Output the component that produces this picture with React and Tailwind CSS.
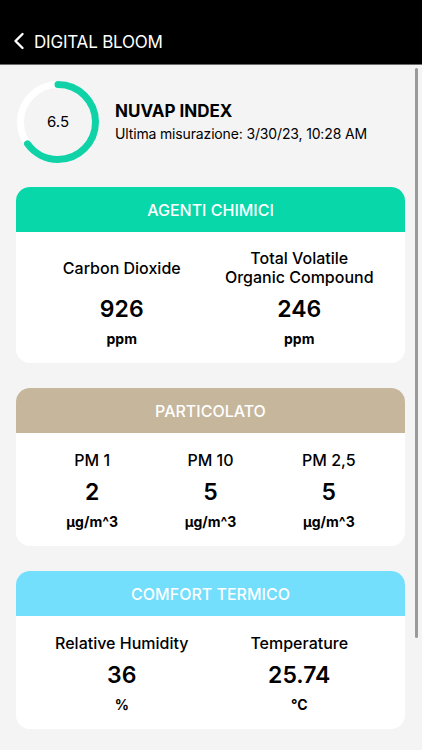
import React from 'react';

const FONT = { fontFamily: 'Inter, "Noto Sans", sans-serif' };

// dati della schermata
const SECTIONS = [
  {
    title: 'AGENTI CHIMICI',
    color: 'bg-[#08d7aa]',
    cols: 'grid-cols-2',
    label: 'h-[38px]',
    items: [
      { label: 'Carbon Dioxide', value: '926', unit: 'ppm' },
      { label: ['Total Volatile', 'Organic Compound'], value: '246', unit: 'ppm' },
    ],
  },
  {
    title: 'PARTICOLATO',
    color: 'bg-[#c6b69b]',
    cols: 'grid-cols-3',
    label: 'h-[20px]',
    items: [
      { label: 'PM 1', value: '2', unit: 'µg/m^3' },
      { label: 'PM 10', value: '5', unit: 'µg/m^3' },
      { label: 'PM 2,5', value: '5', unit: 'µg/m^3' },
    ],
  },
  {
    title: 'COMFORT TERMICO',
    color: 'bg-[#74defd]',
    cols: 'grid-cols-2',
    label: 'h-[20px]',
    items: [
      { label: 'Relative Humidity', value: '36', unit: '%' },
      { label: 'Temperature', value: '25.74', unit: '°C' },
    ],
  },
];

const Ring = ({ value }) => {
  const r = 37.5;
  const c = 2 * Math.PI * r;
  const pct = value / 10;
  return (
    <div className="relative w-[82px] h-[82px] flex-shrink-0">
      <svg width="82" height="82" viewBox="0 0 82 82" className="absolute inset-0 -rotate-90">
        <circle cx="41" cy="41" r={r} fill="none" stroke="#ffffff" strokeWidth="7" />
        <circle
          cx="41"
          cy="41"
          r={r}
          fill="none"
          stroke="#0fd3a6"
          strokeWidth="7"
          strokeLinecap="round"
          strokeDasharray={`${c * pct} ${c}`}
        />
      </svg>
      <div className="absolute inset-0 flex items-center justify-center text-[15px] text-black">
        {value}
      </div>
    </div>
  );
};

const Section = ({ section }) => (
  <div className="rounded-[14px] overflow-hidden bg-white">
    <div className={`${section.color} h-[45px] flex items-center justify-center text-white text-[16px] font-medium`}>
      {section.title}
    </div>
    <div className={`grid ${section.cols} px-[17px] pt-[17px] pb-[16px]`}>
      {section.items.map((item, i) => (
        <div key={i} className="flex flex-col items-center text-black">
          <div className={`${section.label} flex flex-col justify-center items-center text-[16px] leading-[19px] font-medium text-center`}>
            {Array.isArray(item.label) ? item.label.map((l) => <span key={l}>{l}</span>) : item.label}
          </div>
          <div className="mt-[9px] text-[23px] leading-[26px] font-semibold">{item.value}</div>
          <div className="mt-[8px] text-[14px] leading-[17px] font-bold">{item.unit}</div>
        </div>
      ))}
    </div>
  </div>
);

const App = () => {
  return (
    <div className="relative w-[422px] h-[750px] overflow-hidden bg-[#f4f4f4]" style={FONT}>
      {/* Header */}
      <div className="h-[65px] bg-black border-b border-[#6b6b6b] flex items-end pb-[12px] pl-[13px]">
        <svg width="12" height="18" viewBox="0 0 12 18" className="mr-[9px] mb-[2px]">
          <path d="M9.5 2 L2.5 9 L9.5 16" fill="none" stroke="#fff" strokeWidth="2.4" strokeLinecap="round" strokeLinejoin="round" />
        </svg>
        <span className="text-white text-[17px] leading-[20px] tracking-[-0.2px]">DIGITAL BLOOM</span>
      </div>

      {/* Contenuto */}
      <div className="pl-4 pr-[17px]">
        <div className="flex items-center pt-[16px] pl-[1px]">
          <Ring value={6.5} />
          <div className="ml-[16px] text-black">
            <p className="text-[17px] leading-[22px] font-bold">NUVAP INDEX</p>
            <p className="text-[14px] leading-[20px] mt-[2px] tracking-[-0.15px]">Ultima misurazione: 3/30/23, 10:28 AM</p>
          </div>
        </div>

        <div className="mt-[24px] flex flex-col gap-[25px]">
          {SECTIONS.map((s) => (
            <Section key={s.title} section={s} />
          ))}
        </div>
      </div>

      {/* indicatore di scorrimento */}
      <div className="absolute left-[415px] top-[68px] w-[3px] h-[570px] rounded-full bg-[#9a9a9a]" />
    </div>
  );
};

export default App;
